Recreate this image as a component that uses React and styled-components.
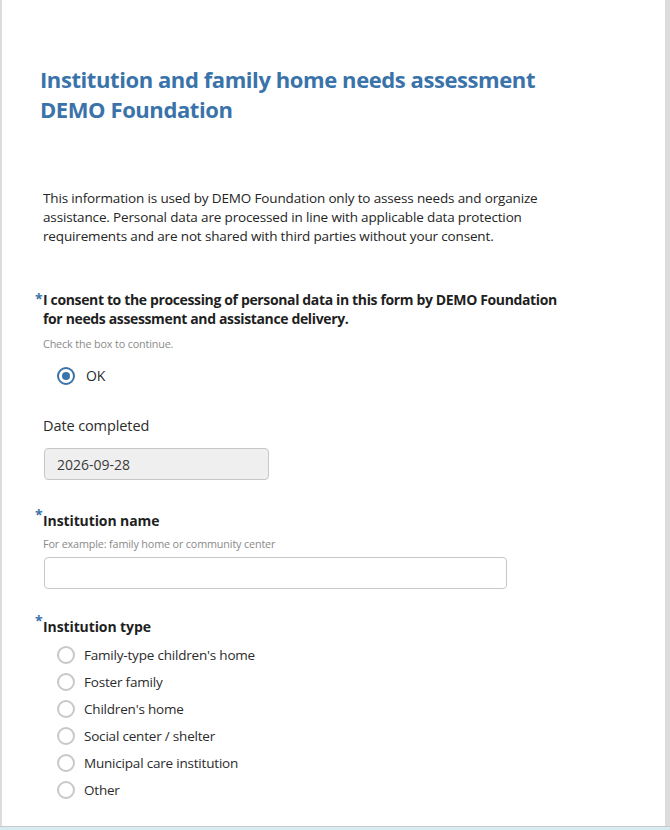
import React from "react";
import styled, { createGlobalStyle } from "styled-components";

const Global = createGlobalStyle`
  html, body { margin: 0; padding: 0; }
  body {
    background: #d7ecef;
    font-family: "Open Sans", "Noto Sans", sans-serif;
    color: #252525;
  }
`;

const Frame = styled.div`
  background: #dcdcdc;
  padding: 0 5px 0 2px;
  height: 827px;
  box-sizing: border-box;
  border-bottom: 1px solid #c9c9c9;
`;

const Card = styled.main`
  background: #fff;
  height: 100%;
  box-sizing: border-box;
  padding: 65px 0 0 38px;
  overflow: hidden;
`;

const Title = styled.h1`
  margin: 0;
  color: #3a73a9;
  font-size: 22px;
  line-height: 29.5px;
  font-weight: 700;
  letter-spacing: -0.42px;
`;

const Intro = styled.p`
  margin: 65px 0 0 3px;
  font-size: 13.5px;
  line-height: 19px;
  color: #252525;
  width: 540px;
  letter-spacing: -0.15px;
`;

const Question = styled.section`
  margin-top: ${(p) => p.$top}px;
`;

const QTitle = styled.div`
  position: relative;
  margin-left: 3px;
  font-size: ${(p) => p.$size}px;
  line-height: 19px;
  font-weight: 700;
  color: #1f1f1f;
  letter-spacing: ${(p) => p.$ls};
  width: 530px;
`;

const Star = styled.span`
  position: absolute;
  left: -8px;
  top: ${(p) => p.$top}px;
  color: #3a73a9;
  font-size: ${(p) => p.$size}px;
  font-weight: 700;
`;

const Hint = styled.div`
  margin: ${(p) => p.$mt}px 0 0 3px;
  font-size: 10.8px;
  line-height: 14px;
  color: #8a8a8a;
  letter-spacing: -0.15px;
`;

const Options = styled.div`
  display: flex;
  flex-direction: column;
  gap: ${(p) => p.$gap}px;
  margin: ${(p) => p.$mt}px 0 0 17px;
`;

const Option = styled.label`
  display: flex;
  align-items: center;
  gap: ${(p) => p.$gap}px;
  font-size: ${(p) => p.$size}px;
  line-height: 20px;
  color: #2b2b2b;
  height: 20px;
  letter-spacing: -0.2px;
`;

const Radio = styled.span`
  width: 18px;
  height: 18px;
  box-sizing: border-box;
  border-radius: 50%;
  border: 2px solid ${(p) => (p.$checked ? "#3a73a9" : "#c8c8c8")};
  display: flex;
  align-items: center;
  justify-content: center;
  flex: none;
  &::after {
    content: "";
    width: 8px;
    height: 8px;
    border-radius: 50%;
    background: ${(p) => (p.$checked ? "#3a73a9" : "transparent")};
  }
`;

const Label = styled.div`
  margin-left: 3px;
  font-size: 14.5px;
  line-height: 20px;
  color: #2b2b2b;
  letter-spacing: -0.1px;
`;

const Field = styled.div`
  margin: ${(p) => p.$mt}px 0 0 4px;
  width: ${(p) => p.$w}px;
  height: 32px;
  box-sizing: border-box;
  border: 1px solid #c8c8c8;
  border-radius: 4px;
  background: ${(p) => (p.$disabled ? "#efefef" : "#fff")};
  display: flex;
  align-items: center;
  padding-left: 12px;
  font-size: 14px;
  color: #3b3b3b;
`;

const types = [
  "Family-type children's home",
  "Foster family",
  "Children's home",
  "Social center / shelter",
  "Municipal care institution",
  "Other",
];

export default function App() {
  return (
    <>
      <Global />
      <Frame>
        <Card>
          <Title>
            Institution and family home needs assessment
            <br />
            DEMO Foundation
          </Title>
          <Intro>
            This information is used by DEMO Foundation only to assess needs and organize
            <br />
            assistance. Personal data are processed in line with applicable data protection
            <br />
            requirements and are not shared with third parties without your consent.
          </Intro>

          <Question $top={44}>
            <QTitle $size={14} $ls="-0.36px">
              <Star $top={-1} $size={14}>*</Star>
              I consent to the processing of personal data in this form by DEMO Foundation
              <br />
              for needs assessment and assistance delivery.
            </QTitle>
            <Hint $mt={9}>Check the box to continue.</Hint>
            <Options $mt={15} $gap={0}>
              <Option $gap={11} $size={14}>
                <Radio $checked />
                OK
              </Option>
            </Options>
          </Question>

          <Question $top={30}>
            <Label>Date completed</Label>
            <Field $mt={12} $w={225} $disabled>2026-09-28</Field>
          </Question>

          <Question $top={31}>
            <QTitle $size={14} $ls="-0.1px">
              <Star $top={-6} $size={14}>*</Star>
              Institution name
            </QTitle>
            <Hint $mt={7}>For example: family home or community center</Hint>
            <Field $mt={6} $w={463} />
          </Question>

          <Question $top={28}>
            <QTitle $size={14} $ls="-0.1px">
              <Star $top={-6} $size={14}>*</Star>
              Institution type
            </QTitle>
            <Options $mt={9} $gap={7}>
              {types.map((t) => (
                <Option key={t} $gap={9} $size={13.5}>
                  <Radio />
                  {t}
                </Option>
              ))}
            </Options>
          </Question>
        </Card>
      </Frame>
    </>
  );
}
